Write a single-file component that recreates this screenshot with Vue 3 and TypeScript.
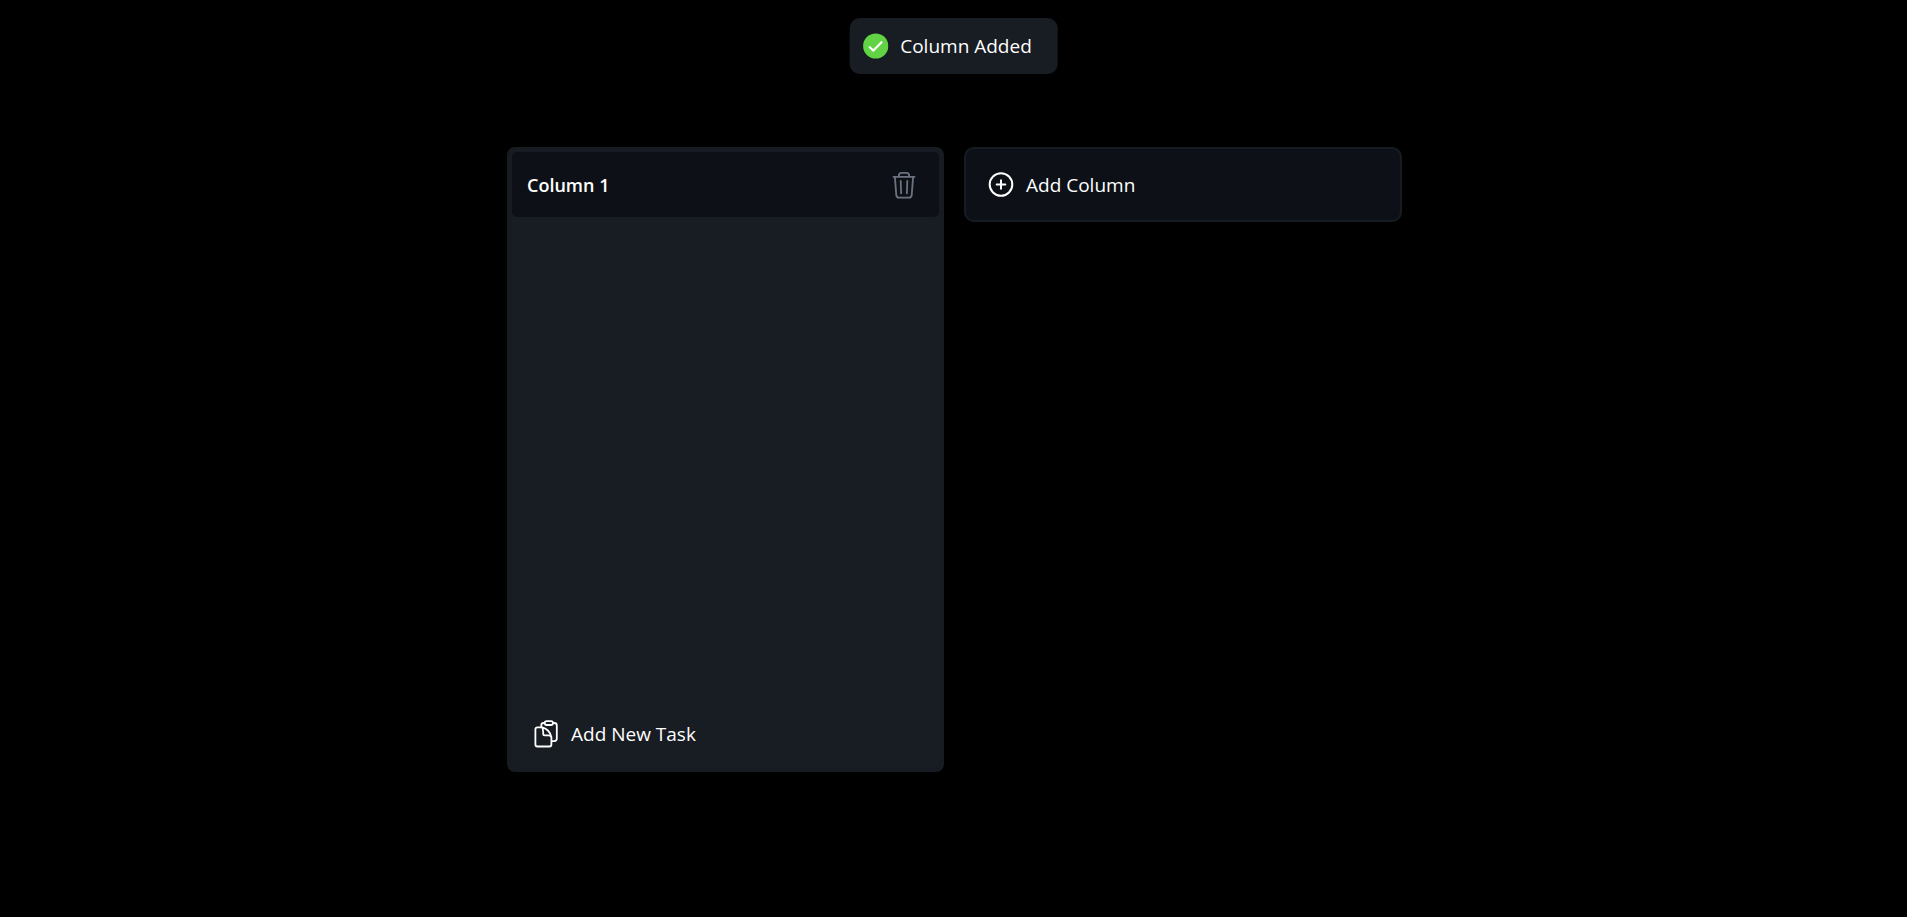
<script setup lang="ts">
import { ref } from 'vue'

interface Column {
  id: number
  title: string
  tasks: string[]
}

const columns = ref<Column[]>([{ id: 1, title: 'Column 1', tasks: [] }])
const toast = ref('Column Added')
let nextId = 2

function addColumn(): void {
  columns.value.push({ id: nextId, title: `Column ${nextId}`, tasks: [] })
  nextId += 1
  toast.value = 'Column Added'
}

function removeColumn(id: number): void {
  columns.value = columns.value.filter((column) => column.id !== id)
  toast.value = 'Column Deleted'
}

function addTask(column: Column): void {
  column.tasks.push(`Task ${column.tasks.length + 1}`)
}
</script>

<template>
  <div class="page">
    <div class="toast" role="status">
      <svg class="toast-icon" viewBox="0 0 26 26" aria-hidden="true">
        <circle cx="13" cy="13" r="12.6" fill="#61d345" />
        <path d="M7 14.2 10.700 17.600 18.800 9.200" fill="none" stroke="#fff" stroke-width="2.2" stroke-linecap="round" stroke-linejoin="round" />
      </svg>
      <span>{{ toast }}</span>
    </div>

    <main class="board">
      <section v-for="column in columns" :key="column.id" class="column">
        <header class="column-head">
          <h2>{{ column.title }}</h2>
          <button class="icon-button" type="button" aria-label="Delete column" @click="removeColumn(column.id)">
            <svg class="trash" viewBox="0 0 24 28" aria-hidden="true">
              <path d="M1.500 5.900h21M6.900 5.700V4.500Q6.900 1.900 9.500 1.900h5Q17.100 1.900 17.100 4.500V5.700M2.900 6.100 4.300 24.100q.2 2.600 2.800 2.600h9.800q2.600 0 2.800-2.600L21.100 6.100M8.700 10l.4 12.300M15.300 10l-.4 12.300" />
            </svg>
          </button>
        </header>
        <ul class="tasks">
          <li v-for="task in column.tasks" :key="task">{{ task }}</li>
        </ul>
        <button class="add-task" type="button" @click="addTask(column)">
          <svg class="clipboard" viewBox="0 0 24 28" aria-hidden="true">
            <path d="M7.300 7V5.200Q7.300 3 9.500 3H11M18.800 3h1.500q2.500 0 2.500 2.500v13.100q0 2.500-2.500 2.500h-2.500M12.600 1.200h4.400q2 0 2 1.900t-2 1.900h-4.400q-2 0-2-1.900t2-1.900Z" />
            <path d="M8.200 7.400H3.400q-2 0-2 2v15.100q0 2 2 2h12q2 0 2-2v-7.200Q15.700 9.200 8.200 7.400q1 2 1 4.800v1.600q0 1.600 1.600 1.600h3.400q2.600 0 3.200 1.900" />
          </svg>
          Add New Task
        </button>
      </section>

      <button class="add-column" type="button" @click="addColumn">
        <svg class="plus" viewBox="0 0 26 26" aria-hidden="true">
          <circle cx="13" cy="12.500" r="11.300" />
          <path d="M13 8.200v8.600M8.700 12.500h8.600" />
        </svg>
        Add Column
      </button>
    </main>
  </div>
</template>

<style>
body {
  margin: 0;
  background: #000;
}
</style>

<style scoped>
.page {
  box-sizing: border-box;
  display: flex;
  align-items: center;
  justify-content: center;
  min-height: 100vh;
  padding: 2px 0 0 2px;
  background: #000;
  color: #fff;
  font: 400 19px/30px "Segoe UI", "Open Sans", "Noto Sans", sans-serif;
}

.toast {
  position: fixed;
  top: 18px;
  left: 50%;
  transform: translateX(-50%);
  box-sizing: border-box;
  display: flex;
  align-items: center;
  gap: 12px;
  height: 56px;
  padding: 0 26px 0 13px;
  border-radius: 10px;
  background: #181c23;
  white-space: nowrap;
}

.toast-icon {
  width: 26px;
  height: 26px;
}

.board {
  display: flex;
  align-items: flex-start;
  gap: 20px;
}

.column {
  box-sizing: border-box;
  display: flex;
  flex-direction: column;
  width: 437px;
  min-height: 625px;
  border: 5px solid #161c22;
  border-radius: 8px;
  background: #181c23;
}

.column-head {
  box-sizing: border-box;
  display: flex;
  align-items: center;
  justify-content: space-between;
  height: 65px;
  padding: 0 23px 0 15px;
  border-radius: 5px;
  background: #0d1117;
}

h2 {
  margin: 0;
  font-size: 18px;
  font-weight: 600;
}

button {
  border: 0;
  background: none;
  color: inherit;
  font: inherit;
  text-align: left;
  cursor: pointer;
}

svg {
  display: block;
  flex: none;
}

.icon-button {
  padding: 0;
  color: #6b7280;
}

.trash,
.clipboard,
.plus {
  fill: none;
  stroke: currentColor;
  stroke-width: 2;
  stroke-linecap: round;
  stroke-linejoin: round;
}

.trash,
.clipboard {
  width: 24px;
  height: 28px;
}

.trash {
  stroke-width: 1.8;
}

.clipboard {
  stroke-width: 1.8;
}

.plus {
  width: 26px;
  height: 26px;
}

.tasks {
  flex: 1;
  margin: 0;
  padding: 10px 20px;
  list-style: none;
}

.add-task {
  display: flex;
  align-items: center;
  gap: 13px;
  padding: 18px 22px;
}

.add-column {
  box-sizing: border-box;
  display: flex;
  align-items: center;
  gap: 12px;
  width: 438px;
  height: 75px;
  padding: 0 22px;
  border: 2px solid #161c22;
  border-radius: 10px;
  background: #0d1117;
}
</style>
